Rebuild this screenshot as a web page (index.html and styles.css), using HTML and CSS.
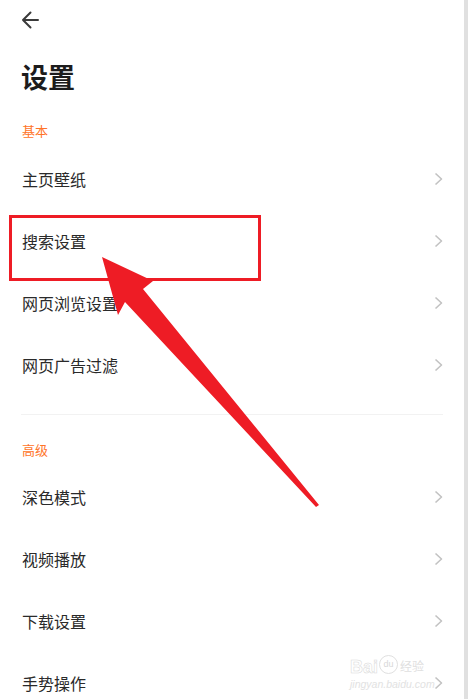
FILE: index.html
```html
<!DOCTYPE html>
<html lang="zh-CN">

<head>
  <meta name="viewport" content="width=device-width, initial-scale=1.0">
  <link rel="stylesheet" href="styles.css">
</head>

<body>

  <div class="page">
    <div class="top-bar">
      <svg class="back-icon" width="18" height="18" viewBox="0 0 18 18">
        <path d="M17 9 H2 M9.5 1.5 L2 9 L9.5 16.5" fill="none" stroke="#3a3a3a" stroke-width="2" stroke-linecap="round" stroke-linejoin="round" />
      </svg>
    </div>

    <h1 class="title">设置</h1>

    <div class="section">
      <div class="section-label">基本</div>
      <div class="row"><span>主页壁纸</span><i class="chev"></i></div>
      <div class="row"><span>搜索设置</span><i class="chev"></i></div>
      <div class="row"><span>网页浏览设置</span><i class="chev"></i></div>
      <div class="row"><span>网页广告过滤</span><i class="chev"></i></div>
    </div>

    <div class="divider"></div>

    <div class="section">
      <div class="section-label">高级</div>
      <div class="row"><span>深色模式</span><i class="chev"></i></div>
      <div class="row"><span>视频播放</span><i class="chev"></i></div>
      <div class="row"><span>下载设置</span><i class="chev"></i></div>
      <div class="row"><span>手势操作</span><i class="chev"></i></div>
    </div>

    <!-- annotation drawn over the screenshot -->
    <svg class="markup" width="468" height="699" viewBox="0 0 468 699">
      <rect x="10.5" y="216.5" width="249" height="63" fill="none" stroke="#ee1c25" stroke-width="3" />
      <polygon points="102,257 153,281 143,289 319,505 316,507 125,302 118,315" fill="#ee1c25" />
    </svg>

    <div class="watermark">
      <div class="wm-logo">
        <span class="wm-bai">Bai</span>
        <span class="wm-paw">du</span>
        <span class="wm-jy">经验</span>
      </div>
      <div class="wm-url">jingyan.baidu.com</div>
    </div>
  </div>

  <script>
    // chevrons are the same everywhere, so fill them in once
    document.querySelectorAll('.chev').forEach(el => {
      el.innerHTML = '<svg width="9" height="14" viewBox="0 0 9 14"><path d="M1.5 1.5 L7.5 7 L1.5 12.5" fill="none" stroke="#c2c2c2" stroke-width="1.6" stroke-linejoin="round"/></svg>';
    });
  </script>

</body>

</html>
```

FILE: styles.css
```css
html,
body {
  margin: 0;
  padding: 0;
  background: #fff;
  font-family: "Noto Sans CJK SC", "Noto Sans", sans-serif;
  overflow: hidden;
}

.page {
  position: relative;
  width: 464px;
  height: 699px;
  border-right: 4px solid #e0e0e0;
  background: #fff;
  overflow: hidden;
}

.top-bar {
  height: 40px;
  display: flex;
  align-items: center;
  padding-left: 21px;
}

.back-icon {
  display: block;
}

.title {
  margin: 19px 0 0;
  padding-left: 21px;
  font-size: 27px;
  line-height: 36px;
  font-weight: bold;
  color: #1c1c1c;
}

.section-label {
  margin-top: 26px;
  margin-bottom: 7px;
  padding-left: 22px;
  font-size: 13px;
  line-height: 20px;
  color: #ff7428;
}

.row {
  height: 62px;
  display: flex;
  justify-content: space-between;
  align-items: center;
  padding: 0 21px 0 22px;
  font-size: 16px;
  color: #2a2a2a;
}

.chev {
  display: flex;
  width: 9px;
  height: 14px;
}

.divider {
  height: 1px;
  margin: 18px 21px 0 21px;
  background: #f2f2f2;
}

.divider + .section .section-label {
  margin-top: 25px;
  margin-bottom: 6px;
}

.markup {
  position: absolute;
  left: 0;
  top: 0;
  pointer-events: none;
}

/* faint site watermark */
.watermark {
  position: absolute;
  left: 350px;
  top: 644px;
  color: #e4e4e4;
  font-family: "Liberation Sans", "Noto Sans CJK SC", sans-serif;
}

.wm-logo {
  display: flex;
  align-items: flex-end;
  height: 30px;
}

.wm-bai {
  font-size: 18px;
  font-weight: bold;
  line-height: 14px;
  -webkit-text-stroke: 0.5px #d8d8d8;
  color: #fff;
}

.wm-paw {
  width: 17px;
  height: 17px;
  margin: 0 2px 0 1px;
  border: 1.5px solid #e0e0e0;
  border-radius: 50%;
  font-size: 9px;
  line-height: 17px;
  text-align: center;
  color: #d8d8d8;
}

.wm-jy {
  font-size: 12px;
  line-height: 14px;
  color: #e0e0e0;
}

.wm-url {
  margin-top: 4px;
  font-size: 10.5px;
  font-style: italic;
  color: #e2e2e2;
}
```
